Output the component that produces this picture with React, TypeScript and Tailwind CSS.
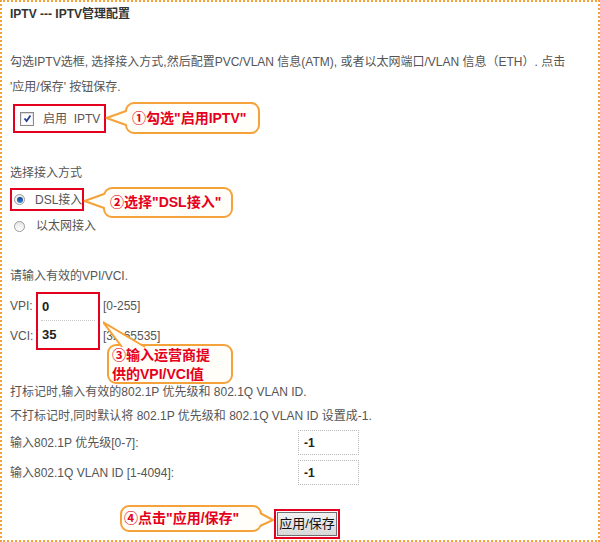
import React from "react";

const RED = "border-[#e5001f]";

function TailLeft({ h, tipY }: { h: number; tipY: number }) {
  return (
    <svg
      className="absolute top-[-2px] left-[-22px]"
      width={25}
      height={h}
      viewBox={`0 0 25 ${h}`}
    >
      <polygon points={`24,${tipY - 7} 1.5,${tipY} 24,${tipY + 7}`} fill="#fffef8" />
      <polyline
        points={`21,${tipY - 7} 1.5,${tipY} 21,${tipY + 7}`}
        fill="none"
        stroke="#f5a23a"
        strokeWidth={2}
        strokeLinejoin="round"
      />
    </svg>
  );
}

function Callout({
  children,
  className,
  tail,
}: {
  children: React.ReactNode;
  className: string;
  tail?: React.ReactNode;
}) {
  return (
    <div
      className={`relative shrink-0 whitespace-nowrap border-2 border-[#f5a23a] rounded-[9px] bg-[#fffef8] text-[#e60020] font-bold text-[14px] ${className}`}
    >
      {tail}
      <div className="relative">{children}</div>
    </div>
  );
}

function Radio({ on }: { on?: boolean }) {
  return (
    <span className="inline-flex shrink-0 w-[11px] h-[11px] rounded-full border border-[#9a9a9a] bg-gradient-to-b from-[#e6e6e6] to-[#ffffff] items-center justify-center">
      {on && (
        <span className="w-[6px] h-[6px] rounded-full bg-gradient-to-b from-[#0e3f8a] to-[#3c8ad8]" />
      )}
    </span>
  );
}

export default function App() {
  return (
    <div className="w-[600px] h-[542px] relative border-2 border-dotted border-[#f5a23a] bg-white overflow-hidden text-[12px] text-[#555] font-['Liberation_Sans','Noto_Sans_CJK_SC',sans-serif]">
      <div className="pl-[8px] pt-[4px]">
        {/* Title */}
        <div className="h-[16px] leading-[16px] font-bold text-[#333] text-[12px]">
          IPTV --- IPTV管理配置
        </div>

        {/* Description */}
        <div className="mt-[28px] leading-[25px] whitespace-nowrap">
          <div>
            勾选IPTV选框, 选择接入方式,然后配置PVC/VLAN 信息(ATM), 或者以太网端口/VLAN 信息（ETH）. 点击
          </div>
          <div>'应用/保存' 按钮保存.</div>
        </div>

        {/* Enable IPTV row */}
        <div className="mt-[4px] flex items-start">
          <div
            className={`ml-[3px] w-[93px] h-[29px] shrink-0 whitespace-nowrap border-2 ${RED} flex items-center pl-[5px]`}
          >
            <span className="w-[14px] h-[14px] shrink-0 border border-[#8a8a8a] bg-gradient-to-b from-[#dcdcdc] to-[#f8f8f8] flex items-center justify-center">
              <span className="w-[10px] h-[10px] bg-white flex items-center justify-center">
                <svg width="9" height="9" viewBox="0 0 9 9">
                  <path
                    d="M1.5 4.5 L3.6 7 L7.5 1.5"
                    fill="none"
                    stroke="#1f3f9a"
                    strokeWidth={1.8}
                  />
                </svg>
              </span>
            </span>
            <span className="ml-[9px]">启用&nbsp; IPTV</span>
          </div>
          <Callout
            className="ml-[19px] -mt-[2px] w-[135px] h-[32px] flex items-center pl-[5px]"
            tail={<TailLeft h={32} tipY={16} />}
          >
            ①勾选"启用IPTV"
          </Callout>
        </div>

        {/* Access mode */}
        <div className="mt-[31px] h-[16px] leading-[16px]">选择接入方式</div>
        <div className="mt-[6px] flex items-start">
          <div
            className={`mt-[1px] w-[74px] h-[23px] shrink-0 whitespace-nowrap border-2 ${RED} flex items-center pl-[2px]`}
          >
            <Radio on />
            <span className="ml-[10px]">DSL接入</span>
          </div>
          <Callout
            className="ml-[19px] w-[130px] h-[31px] flex items-center pl-[5px]"
            tail={<TailLeft h={31} tipY={14} />}
          >
            ②选择"DSL接入"
          </Callout>
        </div>
        <div className="h-[16px] flex items-center pl-[4px] whitespace-nowrap">
          <Radio />
          <span className="ml-[11px]">以太网接入</span>
        </div>

        {/* VPI / VCI */}
        <div className="mt-[34px] h-[16px] leading-[16px]">请输入有效的VPI/VCI.</div>
        <div className="mt-[8px] flex items-start">
          <div className="w-[26px] flex flex-col pt-[6px]">
            <div className="h-[30px] leading-[16px]">VPI:</div>
            <div className="h-[16px] leading-[16px]">VCI:</div>
          </div>
          <div className={`w-[64px] h-[58px] border-2 ${RED} flex flex-col pl-[3px] pr-[3px]`}>
            <div className="h-[27px] border-b border-dotted border-[#c8c8c8] flex items-center pl-[1px] text-[#222] text-[13px] font-bold">
              0
            </div>
            <div className="h-[27px] flex items-center pl-[1px] text-[#222] text-[13px] font-bold">
              35
            </div>
          </div>
          <div className="ml-[3px] flex flex-col pt-[6px]">
            <div className="h-[30px] leading-[16px]">[0-255]</div>
            <div className="h-[16px] leading-[16px]">[32-65535]</div>
          </div>
        </div>

        {/* Tag info */}
        <div className="mt-[30px] h-[24px] leading-[24px]">
          打标记时,输入有效的802.1P 优先级和 802.1Q VLAN ID.
        </div>
        <div className="h-[24px] leading-[24px]">
          不打标记时,同时默认将 802.1P 优先级和 802.1Q VLAN ID 设置成-1.
        </div>

        <div className="mt-[2px] flex flex-col gap-[5px]">
          <div className="flex items-center h-[25px]">
            <div className="w-[288px]">输入802.1P 优先级[0-7]:</div>
            <div className="w-[61px] h-[25px] border border-dotted border-[#b9b9b9] flex items-center pl-[5px] text-[#222] font-bold">
              -1
            </div>
          </div>
          <div className="flex items-center h-[25px]">
            <div className="w-[288px]">输入802.1Q VLAN ID [1-4094]:</div>
            <div className="w-[61px] h-[25px] border border-dotted border-[#b9b9b9] flex items-center pl-[5px] text-[#222] font-bold">
              -1
            </div>
          </div>
        </div>

        {/* Apply row */}
        <div className="mt-[20px] flex items-start">
          <Callout
            className="ml-[110px] w-[142px] h-[27px] flex items-center pl-[2px]"
            tail={
              <svg
                className="absolute top-[-2px] right-[-15px]"
                width={17}
                height={27}
                viewBox="0 0 17 27"
              >
                <polygon points="0,8 15,15 0,21" fill="#fffef8" />
                <polyline
                  points="2,8 15,15 2,21"
                  fill="none"
                  stroke="#f5a23a"
                  strokeWidth={2}
                  strokeLinejoin="round"
                />
              </svg>
            }
          >
            ④点击"应用/保存"
          </Callout>
          <div className={`ml-[12px] mt-[4px] w-[66px] h-[30px] border-2 ${RED} p-[1px]`}>
            <div className="w-full h-full border border-[#707070] bg-gradient-to-b from-[#f2f2f2] to-[#d8d8d8] flex items-center justify-center text-[13px] text-[#111] whitespace-nowrap">
              应用/保存
            </div>
          </div>
        </div>
      </div>

      {/* Callout 3 overlay */}
      <div className="absolute left-[105px] top-[342px]">
        <Callout
          className="w-[126px] h-[40px] leading-[19px] pl-[3px]"
          tail={
            <svg
              className="absolute left-[-6px] top-[-25px]"
              width={48}
              height={29}
              viewBox="0 0 48 29"
            >
              <polygon points="0,1 20,28 44,28" fill="#fffef8" />
              <polyline
                points="19,26 0,1 42,26"
                fill="none"
                stroke="#f5a23a"
                strokeWidth={2}
                strokeLinejoin="round"
              />
            </svg>
          }
        >
          <div>③输入运营商提</div>
          <div>供的VPI/VCI值</div>
        </Callout>
      </div>
    </div>
  );
}
